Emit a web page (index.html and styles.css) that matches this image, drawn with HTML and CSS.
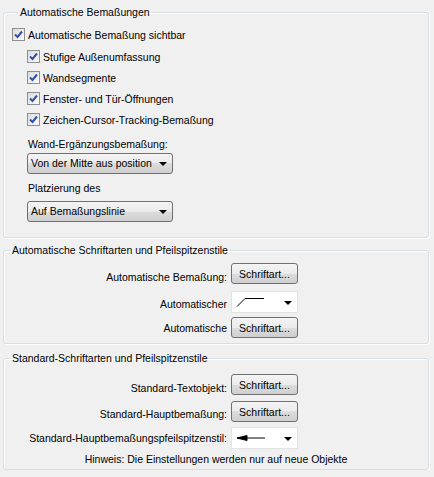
FILE: index.html
```html
<!DOCTYPE html>
<html lang="de">
<head>
    <meta charset="UTF-8">
    <title>Bemaßungen</title>
    <link rel="stylesheet" href="styles.css">
</head>
<body>
    <div class="panel">
        <fieldset class="group group-auto">
            <legend>Automatische Bemaßungen</legend>
            <label class="check"><span class="box"><svg viewBox="0 0 11 11"><path d="M2 5.5 L4.5 8 L9 2.5"/></svg></span>Automatische Bemaßung sichtbar</label>
            <div class="sublist">
                <label class="check"><span class="box"><svg viewBox="0 0 11 11"><path d="M2 5.5 L4.5 8 L9 2.5"/></svg></span>Stufige Außenumfassung</label>
                <label class="check"><span class="box"><svg viewBox="0 0 11 11"><path d="M2 5.5 L4.5 8 L9 2.5"/></svg></span>Wandsegmente</label>
                <label class="check"><span class="box"><svg viewBox="0 0 11 11"><path d="M2 5.5 L4.5 8 L9 2.5"/></svg></span>Fenster- und Tür-Öffnungen</label>
                <label class="check"><span class="box"><svg viewBox="0 0 11 11"><path d="M2 5.5 L4.5 8 L9 2.5"/></svg></span>Zeichen-Cursor-Tracking-Bemaßung</label>
                <div class="field-label">Wand-Ergänzungsbemaßung:</div>
                <div class="combo combo-wall">Von der Mitte aus position<span class="caret"></span></div>
                <div class="field-label">Platzierung des</div>
                <div class="combo combo-place">Auf Bemaßungslinie<span class="caret"></span></div>
            </div>
        </fieldset>

        <fieldset class="group group-fonts">
            <legend>Automatische Schriftarten und Pfeilspitzenstile</legend>
            <div class="form-grid">
                <div class="row-label">Automatische Bemaßung:</div>
                <button class="btn">Schriftart...</button>
                <div class="row-label">Automatischer</div>
                <div class="arrow-pick">
                    <svg width="30" height="12" viewBox="0 0 30 12"><path d="M1 10.5 L9 2.5 M9 2.5 H28" /></svg>
                    <span class="caret"></span>
                </div>
                <div class="row-label">Automatische</div>
                <button class="btn">Schriftart...</button>
            </div>
        </fieldset>

        <fieldset class="group group-std">
            <legend>Standard-Schriftarten und Pfeilspitzenstile</legend>
            <div class="form-grid">
                <div class="row-label">Standard-Textobjekt:</div>
                <button class="btn">Schriftart...</button>
                <div class="row-label">Standard-Hauptbemaßung:</div>
                <button class="btn btn-second">Schriftart...</button>
                <div class="row-label">Standard-Hauptbemaßungspfeilspitzenstil:</div>
                <div class="arrow-pick">
                    <svg width="30" height="12" viewBox="0 0 30 12"><path class="head" d="M1 6 L11 3.5 V8.5 Z" /><path d="M1 6 H29" /></svg>
                    <span class="caret"></span>
                </div>
            </div>
            <div class="note">Hinweis: Die Einstellungen werden nur auf neue Objekte</div>
        </fieldset>
    </div>
</body>
</html>
```

FILE: styles.css
```css
* {
    box-sizing: border-box;
}

body {
    margin: 0;
    background: #f0f0f0;
    color: #000;
    font-family: "Liberation Sans", Arial, sans-serif;
    font-size: 10.5px;
}

.panel {
    padding: 0 5px 0 3px;
}

.group {
    margin: 0;
    padding: 0;
    border: 1px solid #d5dfe5;
    border-radius: 3px;
    box-shadow: 1px 1px 0 #fff, inset 1px 1px 0 #fff;
    min-inline-size: 0;
}

.group legend {
    margin-left: 7px;
    padding: 0 1px;
    line-height: 12px;
}

.group-auto {
    margin-top: 6px;
    padding: 6px 0 15px 8px;
}

.group-fonts {
    margin-top: 6px;
    padding: 7px 0 5px 0;
}

.group-std {
    margin-top: 8px;
    padding: 10px 0 3px 0;
}

/* checkboxes */
.check {
    display: flex;
    align-items: center;
    height: 21px;
    gap: 3px;
}

.box {
    width: 13px;
    height: 13px;
    border: 1px solid #8f8f8f;
    background: linear-gradient(135deg, #dcdcdc, #fbfbfb);
    display: flex;
    align-items: center;
    justify-content: center;
}

.box svg {
    width: 11px;
    height: 11px;
    fill: none;
    stroke: #3051a8;
    stroke-width: 2;
}

.sublist {
    margin-top: 1px;
    padding-left: 15px;
}

.field-label {
    margin-top: 8px;
    height: 13px;
    line-height: 13px;
    padding-left: 1px;
}

.combo {
    position: relative;
    width: 146px;
    height: 21px;
    line-height: 19px;
    padding-left: 3px;
    border: 1px solid #707070;
    border-radius: 3px;
    background: linear-gradient(#f4f4f4, #ebebeb 50%, #dddddd 50%, #cfcfcf);
}

.combo-wall {
    margin-top: 2px;
}

.combo-place {
    margin-top: 6px;
}

.caret {
    position: absolute;
    right: 5px;
    top: 8px;
    border-left: 4px solid transparent;
    border-right: 4px solid transparent;
    border-top: 4px solid #000;
}

/* label + control rows */
.form-grid {
    display: grid;
    grid-template-columns: 223px 67px;
    column-gap: 4px;
    align-items: center;
}

.row-label {
    text-align: right;
}

.btn {
    font: inherit;
    color: #000;
    width: 67px;
    height: 21px;
    padding: 0;
    border: 1px solid #707070;
    border-radius: 3px;
    background: linear-gradient(#f4f4f4, #ebebeb 50%, #dddddd 50%, #cfcfcf);
}

.group-fonts .btn:first-of-type {
    margin-bottom: 7px;
}

.group-fonts .arrow-pick {
    margin-bottom: 4px;
}

.group-std .btn {
    margin-bottom: 6px;
}

.group-std .btn-second {
    margin-bottom: 5px;
}

.arrow-pick {
    position: relative;
    width: 67px;
    height: 22px;
    background: #fff;
    border: 1px solid #e3e3e3;
    display: flex;
    align-items: center;
    padding-left: 4px;
}

.arrow-pick svg path {
    fill: none;
    stroke: #000;
    stroke-width: 1;
}

.arrow-pick svg path.head {
    fill: #000;
}

.arrow-pick .caret {
    right: 5px;
    top: 9px;
}

.note {
    margin-top: 4px;
    height: 13px;
    line-height: 13px;
    text-align: center;
}
```
